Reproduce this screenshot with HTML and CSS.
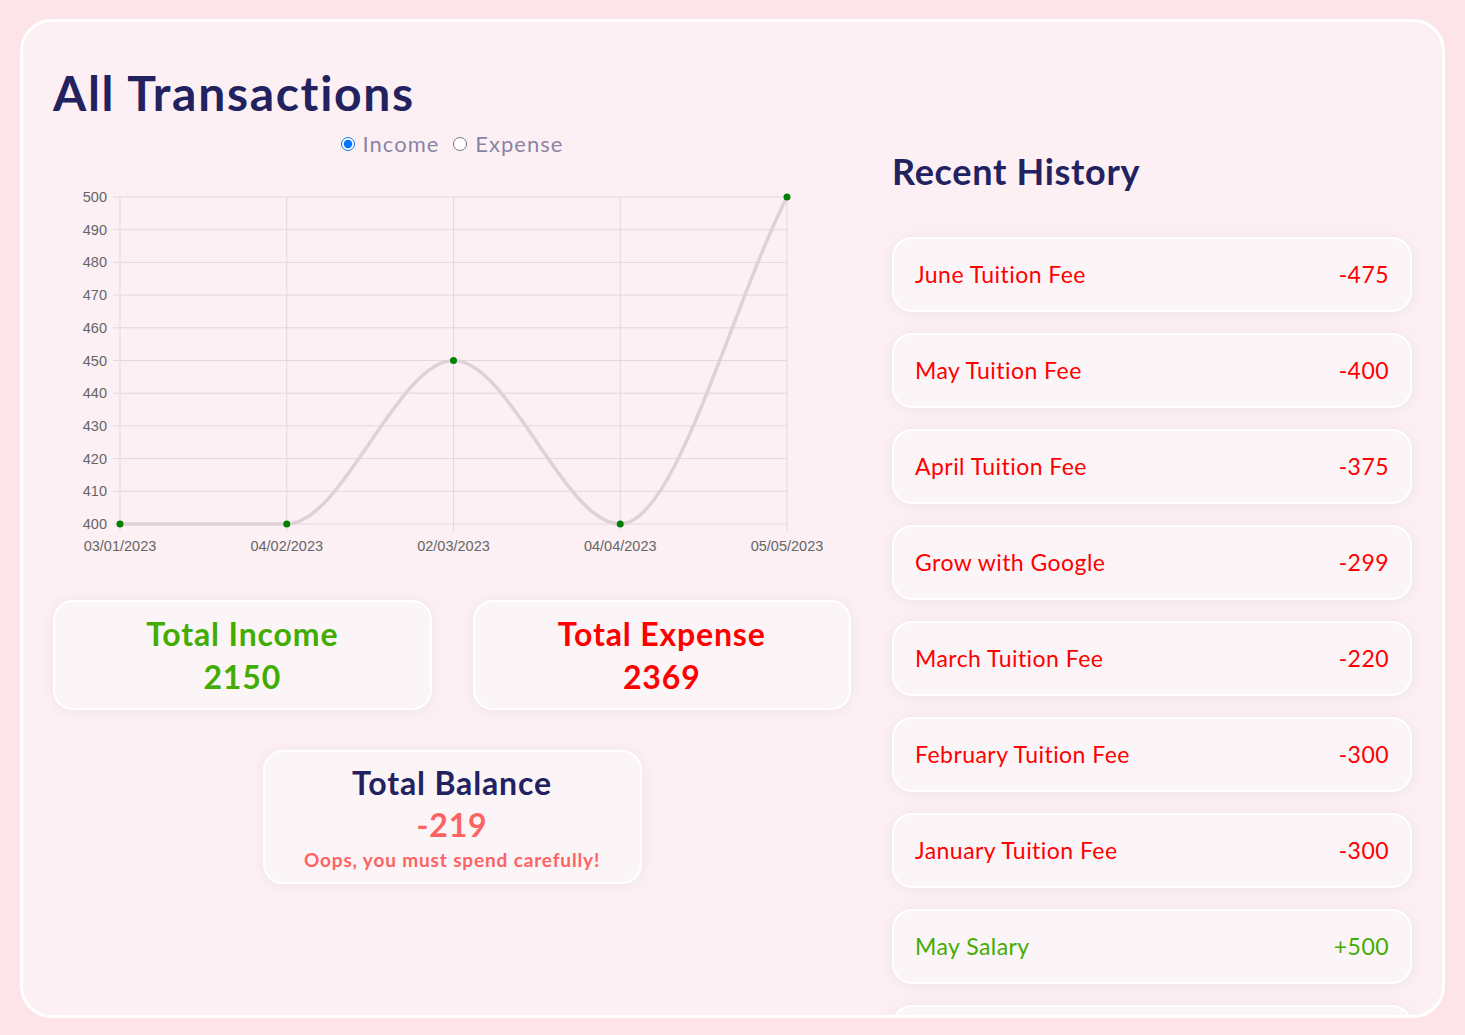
FILE: index.html
```html
<!DOCTYPE html>
<html lang="en">
<head>
  <meta charset="UTF-8" />
  <meta name="viewport" content="width=device-width, initial-scale=1.0" />
  <title>All Transactions</title>
  <link rel="stylesheet" href="styles.css">
</head>
<body>
  <div class="page">
    <main class="card">
      <h1 class="title">All Transactions</h1>
      <div class="layout">
        <!-- Chart and totals -->
        <section class="left">
          <div class="legend">
            <label><input type="radio" name="kind" checked /> Income</label>
            <label><input type="radio" name="kind" /> Expense</label>
          </div>
          <svg class="chart" viewBox="53 158 798 402" width="798" height="402">
            <g class="grid">
              <line x1="113" y1="524" x2="787" y2="524" />
              <line x1="113" y1="491.3" x2="787" y2="491.3" />
              <line x1="113" y1="458.6" x2="787" y2="458.6" />
              <line x1="113" y1="425.9" x2="787" y2="425.9" />
              <line x1="113" y1="393.2" x2="787" y2="393.2" />
              <line x1="113" y1="360.5" x2="787" y2="360.5" />
              <line x1="113" y1="327.8" x2="787" y2="327.8" />
              <line x1="113" y1="295.1" x2="787" y2="295.1" />
              <line x1="113" y1="262.4" x2="787" y2="262.4" />
              <line x1="113" y1="229.7" x2="787" y2="229.7" />
              <line x1="113" y1="197" x2="787" y2="197" />
              <line x1="120" y1="197" x2="120" y2="531" />
              <line x1="286.75" y1="197" x2="286.75" y2="531" />
              <line x1="453.5" y1="197" x2="453.5" y2="531" />
              <line x1="620.25" y1="197" x2="620.25" y2="531" />
              <line x1="787" y1="197" x2="787" y2="531" />
            </g>
            <g class="y-labels">
              <text x="107" y="529">400</text>
              <text x="107" y="496.3">410</text>
              <text x="107" y="463.6">420</text>
              <text x="107" y="430.9">430</text>
              <text x="107" y="398.2">440</text>
              <text x="107" y="365.5">450</text>
              <text x="107" y="332.8">460</text>
              <text x="107" y="300.1">470</text>
              <text x="107" y="267.4">480</text>
              <text x="107" y="234.7">490</text>
              <text x="107" y="202">500</text>
            </g>
            <g class="x-labels">
              <text x="120" y="551">03/01/2023</text>
              <text x="286.75" y="551">04/02/2023</text>
              <text x="453.5" y="551">02/03/2023</text>
              <text x="620.25" y="551">04/04/2023</text>
              <text x="787" y="551">05/05/2023</text>
            </g>
            <path class="line" d="M120 524 L286.75 524 C342.33 524 397.92 360.5 453.5 360.5 C509.08 360.5 564.67 524 620.25 524 C675.83 524 731.42 306 787 197" />
            <g class="points">
              <circle cx="120" cy="524" r="3.5" />
              <circle cx="286.75" cy="524" r="3.5" />
              <circle cx="453.5" cy="360.5" r="3.5" />
              <circle cx="620.25" cy="524" r="3.5" />
              <circle cx="787" cy="197" r="3.5" />
            </g>
          </svg>
          <div class="totals">
            <div class="stat income">
              <h2>Total Income</h2>
              <p>2150</p>
            </div>
            <div class="stat expense">
              <h2>Total Expense</h2>
              <p>2369</p>
            </div>
          </div>
          <div class="stat balance">
            <h2>Total Balance</h2>
            <p>-219</p>
            <span>Oops, you must spend carefully!</span>
          </div>
        </section>
        <!-- Recent history -->
        <section class="right">
          <h2 class="history-title">Recent History</h2>
          <ul class="history">
            <li class="minus"><span>June Tuition Fee</span><span>-475</span></li>
            <li class="minus"><span>May Tuition Fee</span><span>-400</span></li>
            <li class="minus"><span>April Tuition Fee</span><span>-375</span></li>
            <li class="minus"><span>Grow with Google</span><span>-299</span></li>
            <li class="minus"><span>March Tuition Fee</span><span>-220</span></li>
            <li class="minus"><span>February Tuition Fee</span><span>-300</span></li>
            <li class="minus"><span>January Tuition Fee</span><span>-300</span></li>
            <li class="plus"><span>May Salary</span><span>+500</span></li>
            <li class="plus"></li>
          </ul>
        </section>
      </div>
    </main>
  </div>
</body>
</html>
```

FILE: styles.css
```css
/* CSS Variables */
:root {
  --bg-color: #fde4e9;
  --card-bg: #fcf0f4;
  --box-bg: #fcf5f8;
  --primary: #222260;
  --muted: rgba(34, 34, 96, 0.55);
  --green: #42ad00;
  --red: #ff0000;
  --soft-red: #ff6262;
  --font-stack: 'Lato', 'Open Sans', sans-serif;
}
/* Base Styles */
body {
  margin: 0;
  background-color: var(--bg-color);
  font-family: var(--font-stack);
  color: var(--primary);
}
.page {
  padding: 19px 20px;
}
.card {
  box-sizing: border-box;
  height: 999px;
  padding: 42px 30px 0;
  background-color: var(--card-bg);
  border: 3px solid #ffffff;
  border-radius: 32px;
  overflow: hidden;
}
.title {
  margin: 0;
  font-size: 48px;
  line-height: 1.2;
  font-weight: 700;
  letter-spacing: 1.7px;
}
.layout {
  display: grid;
  grid-template-columns: 798px 1fr;
  gap: 41px;
}
/* Legend */
.legend {
  display: flex;
  justify-content: center;
  gap: 14px;
  margin-top: 8px;
  line-height: 28px;
  font-size: 22px;
  letter-spacing: 1px;
  color: var(--muted);
}
.legend label {
  display: flex;
  align-items: center;
  gap: 8px;
}
.legend input {
  margin: 0;
  width: 14px;
  height: 14px;
}
/* Chart */
.chart {
  display: block;
}
.grid line {
  stroke: #e2d8dc;
  stroke-width: 1;
}
.y-labels text,
.x-labels text {
  font-family: 'Liberation Sans', Arial, sans-serif;
  font-size: 14.5px;
  fill: #666666;
}
.y-labels text {
  text-anchor: end;
}
.x-labels text {
  text-anchor: middle;
}
.line {
  fill: none;
  stroke: #ddd3d7;
  stroke-width: 3.5;
}
.points circle {
  fill: #008000;
}
/* Totals */
.totals {
  display: grid;
  grid-template-columns: 1fr 1fr;
  gap: 41px;
  margin-top: 40px;
}
.stat {
  box-sizing: border-box;
  height: 110px;
  display: flex;
  flex-direction: column;
  align-items: center;
  justify-content: center;
  background-color: var(--box-bg);
  border: 2px solid #ffffff;
  border-radius: 20px;
  box-shadow: 0px 1px 15px rgba(0, 0, 0, 0.06);
}
.stat h2,
.stat p {
  margin: 0;
  font-size: 32px;
  line-height: 43px;
  font-weight: 700;
  letter-spacing: 0.85px;
}
.income {
  color: var(--green);
}
.expense {
  color: var(--red);
}
.balance {
  width: 379px;
  height: 134px;
  margin: 40px auto 0;
  padding-top: 2px;
}
.balance h2 {
  color: var(--primary);
  line-height: 42px;
}
.balance p {
  color: var(--soft-red);
  line-height: 42px;
}
.balance span {
  color: var(--soft-red);
  font-size: 19px;
  font-weight: 700;
  line-height: 28px;
  letter-spacing: 0.85px;
}
/* Recent History */
.history-title {
  margin: 28px 0 44px;
  font-size: 36px;
  line-height: 1.2;
  font-weight: 700;
  letter-spacing: 0.7px;
}
.history {
  list-style: none;
  margin: 0;
  padding: 0;
  display: flex;
  flex-direction: column;
  gap: 21px;
}
.history li {
  box-sizing: border-box;
  height: 75px;
  flex-shrink: 0;
  padding: 0 21px;
  display: flex;
  justify-content: space-between;
  align-items: center;
  font-size: 23px;
  letter-spacing: 0.45px;
  background-color: var(--box-bg);
  border: 2px solid #ffffff;
  border-radius: 20px;
  box-shadow: 0px 1px 15px rgba(0, 0, 0, 0.06);
}
.history .minus {
  color: var(--red);
}
.history .plus {
  color: var(--green);
}
```
